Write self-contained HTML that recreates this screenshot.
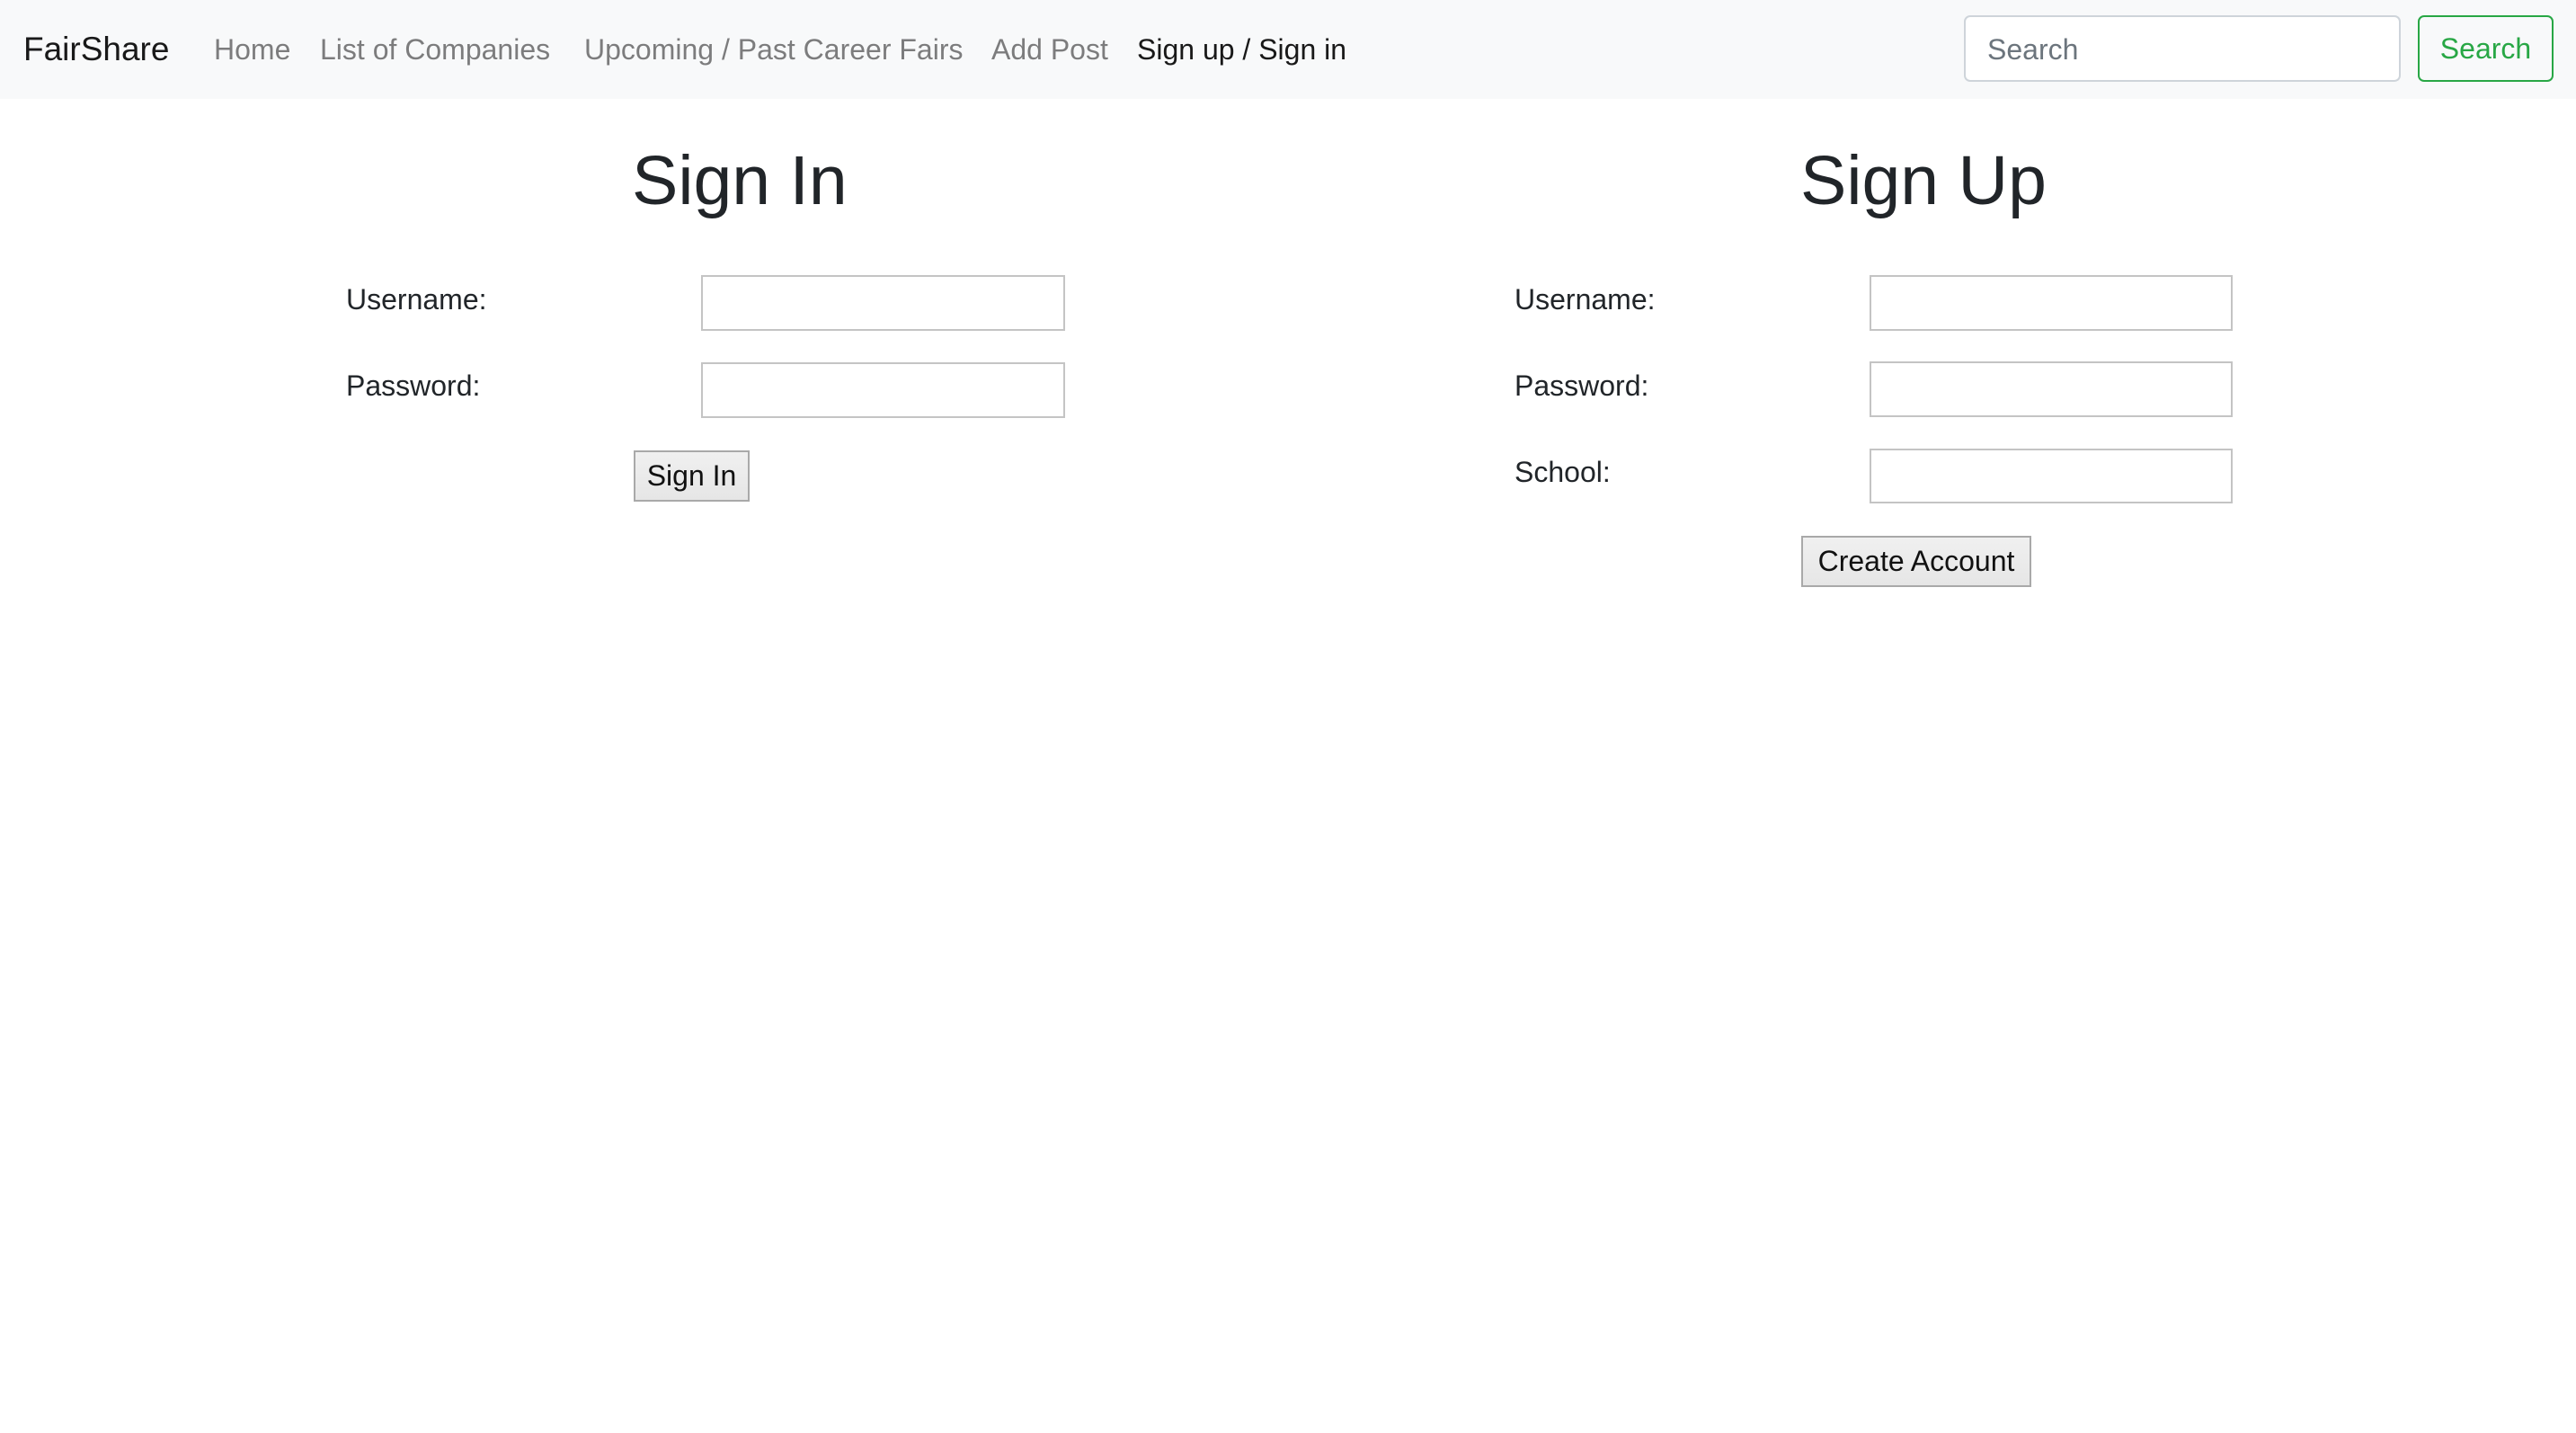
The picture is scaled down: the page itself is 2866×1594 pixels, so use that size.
<!DOCTYPE html>
<html><head><meta charset="utf-8"><style>
*{box-sizing:border-box;margin:0;padding:0}
body{width:2866px;height:1594px;background:#fff;font-family:"Liberation Sans",Arial,sans-serif;color:#212529;position:relative;overflow:hidden}
.nav{position:absolute;left:0;top:0;width:2866px;height:110px;background:#f8f9fa}
.t{position:absolute;white-space:nowrap;line-height:1}
.nl{font-size:32px;color:rgba(0,0,0,.5);top:39px}
.lab{font-size:32px;color:#212529}
.inp{position:absolute;border:2px solid #c4c4c4;background:#fff}
.btn{position:absolute;border:2px solid #a9a9a9;background:linear-gradient(#f0f0f0,#e6e6e6);font-size:32px;display:flex;align-items:center;justify-content:center;color:#111}
h1{position:absolute;font-size:77px;font-weight:500;line-height:1;white-space:nowrap}
</style></head><body>
<div class="nav">
<div class="t" style="left:26px;top:36px;font-size:37px;color:rgba(0,0,0,.9)">FairShare</div>
<div class="t nl" style="left:238px">Home</div>
<div class="t nl" style="left:356px">List of Companies</div>
<div class="t nl" style="left:650px">Upcoming / Past Career Fairs</div>
<div class="t nl" style="left:1103px">Add Post</div>
<div class="t nl" style="left:1265px;color:rgba(0,0,0,.9)">Sign up / Sign in</div>
<div style="position:absolute;left:2185px;top:17px;width:486px;height:74px;border:2px solid #ced4da;border-radius:7px;background:#fff"></div>
<div class="t" style="left:2211px;top:39px;font-size:32px;color:#6c757d">Search</div>
<div style="position:absolute;left:2690px;top:17px;width:151px;height:74px;border:2px solid #28a745;border-radius:7px;display:flex;align-items:center;justify-content:center;font-size:32px;color:#28a745">Search</div>
</div>

<h1 style="left:703px;top:163px">Sign In</h1>
<div class="t lab" style="left:385px;top:317px">Username:</div>
<div class="t lab" style="left:385px;top:413px">Password:</div>
<div class="inp" style="left:780px;top:306px;width:405px;height:62px"></div>
<div class="inp" style="left:780px;top:403px;width:405px;height:62px"></div>
<div class="btn" style="left:705px;top:501px;width:129px;height:57px">Sign In</div>

<h1 style="left:2003px;top:163px">Sign Up</h1>
<div class="t lab" style="left:1685px;top:317px">Username:</div>
<div class="t lab" style="left:1685px;top:413px">Password:</div>
<div class="t lab" style="left:1685px;top:509px">School:</div>
<div class="inp" style="left:2080px;top:306px;width:404px;height:62px"></div>
<div class="inp" style="left:2080px;top:402px;width:404px;height:62px"></div>
<div class="inp" style="left:2080px;top:499px;width:404px;height:61px"></div>
<div class="btn" style="left:2004px;top:596px;width:256px;height:57px">Create Account</div>
</body></html>
